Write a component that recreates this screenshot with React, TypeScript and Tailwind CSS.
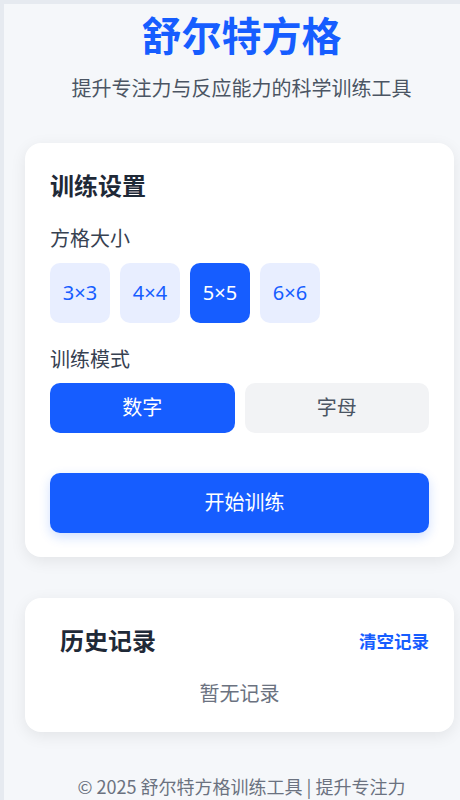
import { useState } from "react";

const sizes = [3, 4, 5, 6];

export default function App() {
  const [size, setSize] = useState(5);
  const [mode, setMode] = useState<"number" | "letter">("number");

  return (
    <div
      className="min-h-[800px] bg-[#e6eaf0] pl-[4px] pt-[4px]"
      style={{ fontFamily: '"Noto Sans", "Noto Sans CJK SC", sans-serif' }}
    >
      <div className="min-h-[796px] bg-[#f5f7fa] pl-[21px] pr-[2px] pt-[8px]">
        <header className="text-center">
          <h1 className="text-[40px] font-bold leading-[48px] text-[#165dff]">舒尔特方格</h1>
          <p className="mt-[14px] text-[20px] leading-[30px] text-[#4b5563]">
            提升专注力与反应能力的科学训练工具
          </p>
        </header>

        {/* settings */}
        <section className="mt-[39px] w-[429px] rounded-2xl bg-white px-[25px] pt-[25px] pb-[24px] shadow-[0_4px_16px_rgba(0,0,0,0.08)]">
          <h2 className="text-[24px] font-bold leading-[36px] text-[#1f2937]">训练设置</h2>

          <div className="mt-[20px] text-[20px] leading-[30px] text-[#374151]">方格大小</div>
          <div className="mt-[9px] flex gap-[10px]">
            {sizes.map((s) => (
              <button
                key={s}
                onClick={() => setSize(s)}
                className={
                  s === size
                    ? "flex h-[60px] w-[60px] items-center justify-center rounded-[10px] bg-[#165dff] text-[20px] text-white"
                    : "flex h-[60px] w-[60px] items-center justify-center rounded-[10px] bg-[#e8eeff] text-[20px] text-[#165dff]"
                }
              >
                {s}×{s}
              </button>
            ))}
          </div>

          <div className="mt-[22px] text-[20px] leading-[30px] text-[#374151]">训练模式</div>
          <div className="mt-[8px] grid grid-cols-2 gap-[10px]">
            <button
              onClick={() => setMode("number")}
              className={
                mode === "number"
                  ? "h-[50px] rounded-[10px] bg-[#165dff] text-[20px] text-white"
                  : "h-[50px] rounded-[10px] bg-[#f2f3f5] text-[20px] text-[#4b5563]"
              }
            >
              数字
            </button>
            <button
              onClick={() => setMode("letter")}
              className={
                mode === "letter"
                  ? "h-[50px] rounded-[10px] bg-[#165dff] text-[20px] text-white"
                  : "h-[50px] rounded-[10px] bg-[#f2f3f5] text-[20px] text-[#4b5563]"
              }
            >
              字母
            </button>
          </div>

          <button className="mt-[40px] h-[60px] w-full rounded-[10px] bg-[#165dff] pl-[10px] text-[20px] text-white shadow-[0_4px_12px_rgba(22,93,255,0.2)]">
            开始训练
          </button>
        </section>

        {/* history */}
        <section className="mt-[41px] w-[429px] rounded-2xl bg-white px-[25px] pt-[25px] pb-[23px] shadow-[0_4px_16px_rgba(0,0,0,0.08)]">
          <div className="flex items-center justify-between pl-[10px]">
            <h2 className="text-[24px] font-bold leading-[36px] text-[#1f2937]">历史记录</h2>
            <button className="text-[17.5px] font-bold text-[#165dff]">清空记录</button>
          </div>
          <p className="mt-[20px] text-center text-[20px] leading-[30px] text-[#6b7280]">暂无记录</p>
        </section>

        <footer
          className="mt-[41px] pb-[10px] text-center text-[18px] leading-[27px] text-[#6b7280]"
          style={{ fontFamily: '"Noto Sans CJK SC", sans-serif' }}
        >
          © 2025 舒尔特方格训练工具 | 提升专注力
        </footer>
      </div>
    </div>
  );
}
